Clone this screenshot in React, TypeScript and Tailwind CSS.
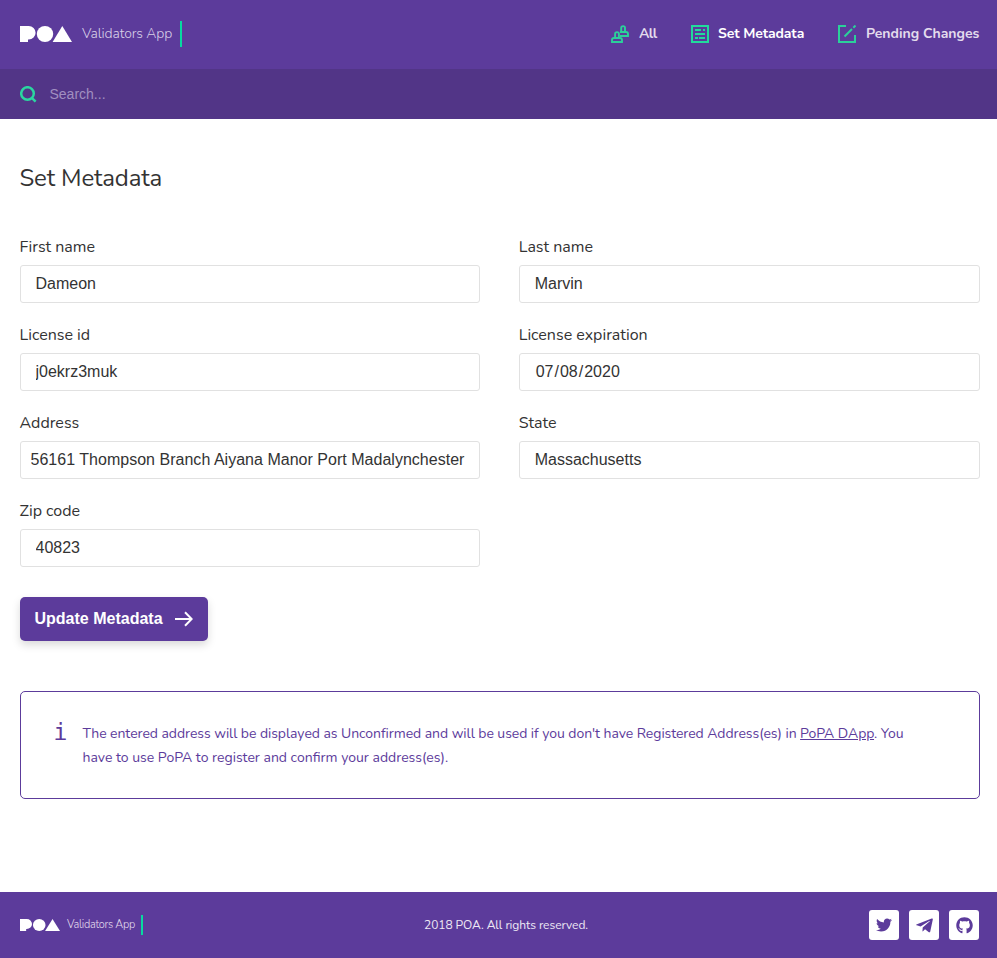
import React from "react";
import { FaTwitter, FaTelegramPlane, FaGithub } from "react-icons/fa";

const nunito = "font-['Nunito','Lato',sans-serif]";
const arial = "font-['Liberation_Sans',Arial,sans-serif]";

function PoaMark({ className }: { className: string }) {
  return (
    <svg className={className} viewBox="0 0 52 16" fill="#fff" preserveAspectRatio="none">
      <path d="M0 0h8.700a6.900 6.700 0 0 1 0 13.400H8V16H0z" />
      <ellipse cx="25" cy="8" rx="8.200" ry="8" />
      <path d="M42.300 0L52 16H32.600z" />
    </svg>
  );
}

function StampIcon() {
  return (
    <svg className="h-[18px] w-[18px]" viewBox="0 0 18 18" fill="none" stroke="#2bd09a" strokeWidth="1.900">
      <path d="M10.200 7V3a1.900 1.900 0 0 1 3.800 0v4M9 7h6a2 2 0 0 1 2 2v2H9" />
      <path d="M4.100 13V9a1.900 1.900 0 0 1 3.800 0v4M3 13h6a2 2 0 0 1 2 2v2H1v-2a2 2 0 0 1 2-2z" />
    </svg>
  );
}

function FormIcon() {
  return (
    <svg className="h-[18px] w-[18px]" viewBox="0 0 18 18" fill="none" stroke="#21dc9c" strokeWidth="2">
      <path d="M1 1h16v16H1zM4 5h6M12 5h2M4 9h10M4 13h3M8 13h6" />
    </svg>
  );
}

function EditIcon() {
  return (
    <svg className="h-[18px] w-[18px]" viewBox="0 0 18 18" fill="none" stroke="#2bd09a" strokeWidth="2">
      <path d="M8 1H1v16h16v-7M6.500 11.500l7.500-7.500M15.300 2.700L17.500 .5" />
    </svg>
  );
}

function Field({ label, value, wide }: { label: string; value: string; wide?: boolean }) {
  return (
    <label className="flex flex-col">
      <span className="h-[38px] pt-px text-base leading-[38px]">{label}</span>
      <input
        defaultValue={value}
        className={`h-[38px] w-full rounded-[3px] border border-[#e1e1e1] bg-white pr-0 text-base text-[#333] outline-none ${arial} ${wide ? "pl-[10px] tracking-[0.02px]" : "pl-[15px]"}`}
      />
    </label>
  );
}

function DateField() {
  return (
    <div className="flex flex-col">
      <span className="h-[38px] pt-px text-base leading-[38px]">License expiration</span>
      <div className={`flex h-[38px] items-center rounded-[3px] border border-[#e1e1e1] bg-white pl-4 text-base text-[#333] ${arial}`}>
        <span>07</span>
        <span className="mx-px">/</span>
        <span>08</span>
        <span className="mx-px">/</span>
        <span>2020</span>
      </div>
    </div>
  );
}

export default function App() {
  return (
    <div className={`flex h-[958px] w-full flex-col bg-white text-[#333] ${nunito}`}>
      <header className="flex h-[69px] shrink-0 items-center justify-between bg-[#5c3b9b] pr-[17px] pb-px pl-5">
        <div className="flex items-center">
          <PoaMark className="h-4 w-[52px]" />
          <span className="ml-[10px] w-[98px] pb-px text-sm font-light tracking-[-0.13px] whitespace-nowrap text-[#d9d0e8]">Validators App</span>
          <span className="h-[26px] w-[2px] bg-[#08d9a0]" />
        </div>
        <nav className="flex items-center text-sm font-bold whitespace-nowrap text-[#e3dced]">
          <a className="flex items-center gap-[10px]"><StampIcon /><span className="w-[52px] pb-px tracking-[-0.6px]">All</span></a>
          <a className="flex items-center gap-[9px] text-white"><FormIcon /><span className="w-[120px] pb-px tracking-[-0.1px]">Set Metadata</span></a>
          <a className="flex items-center gap-[10px]"><EditIcon /><span className="w-[114px] pb-px">Pending Changes</span></a>
        </nav>
      </header>
      <div className="flex h-[50px] shrink-0 items-center bg-[#523587] pl-5">
        <svg className="h-[17px] w-[17px]" viewBox="0 0 17 17" fill="none" stroke="#2bd6a0" strokeWidth="2.500">
          <circle cx="7.500" cy="7.500" r="6.300" />
          <path d="M11.800 11.800l3.800 3.800" />
        </svg>
        <span className={`ml-[12.5px] text-sm text-[#a18fc0] ${arial}`}>Search...</span>
      </div>
      <main className="flex flex-1 flex-col pr-[17.5px] pl-[19.5px]">
        <h1 className="mt-[41px] h-9 text-2xl leading-9 tracking-[-0.15px]">Set Metadata</h1>
        <form className="mt-[31px] grid grid-cols-2 gap-x-[38.4px] gap-y-3">
          <Field label="First name" value="Dameon" />
          <Field label="Last name" value="Marvin" />
          <Field label="License id" value="j0ekrz3muk" />
          <DateField />
          <Field label="Address" value="56161 Thompson Branch Aiyana Manor Port Madalynchester" wide />
          <Field label="State" value="Massachusetts" />
          <Field label="Zip code" value="40823" />
        </form>
        <button className={`mt-[30px] flex h-11 w-[188px] items-center rounded-[5px] bg-[#5c3b9b] pl-[15px] text-base font-bold whitespace-nowrap text-white shadow-[0_4px_8px_rgba(0,0,0,0.15)] ${arial}`}>
          Update Metadata
          <svg className="ml-3 h-4 w-[18px]" viewBox="0 0 18 16" fill="none" stroke="#fff" strokeWidth="2">
            <path d="M0 8h16.500M10 1.300L16.700 8 10 14.700" />
          </svg>
        </button>
        <section className="mt-[50px] flex h-[108px] rounded-[5px] border border-[#5c3b9b] pl-[33px] text-[#5c3b9b]">
          <span className="mt-[26px] w-[29px] font-['DejaVu_Sans_Mono',monospace] text-[23px] leading-7">i</span>
          <p className="mt-[30px] text-sm leading-6 whitespace-nowrap">
            <span className="tracking-[-0.056px]">
              The entered address will be displayed as Unconfirmed and will be used if you don't have Registered Address(es) in{" "}
              <a className="underline">PoPA DApp</a>. You
            </span>
            <br />
            have to use PoPA to register and confirm your address(es).
          </p>
        </section>
      </main>
      <footer className="flex h-[66px] shrink-0 items-center bg-[#5c3b9b] pr-[18px] pl-5">
        <PoaMark className="h-3 w-10" />
        <span className="ml-[7px] w-[74px] text-[11px] font-light tracking-[-0.3px] whitespace-nowrap text-[#e3dced]">Validators App</span>
        <span className="h-5 w-[2px] bg-[#08d9a0]" />
        <span className="ml-[281px] flex-1 text-xs tracking-[-0.06px] whitespace-nowrap text-[#eee9f5]">2018 POA. All rights reserved.</span>
        <div className="flex gap-[10px] text-[#5c3b9b]">
          <a className="flex h-[30px] w-[30px] items-center justify-center rounded-[3px] bg-white"><FaTwitter size={16} /></a>
          <a className="flex h-[30px] w-[30px] items-center justify-center rounded-[3px] bg-white"><FaTelegramPlane size={19} /></a>
          <a className="flex h-[30px] w-[30px] items-center justify-center rounded-[3px] bg-white"><FaGithub size={17} /></a>
        </div>
      </footer>
    </div>
  );
}
